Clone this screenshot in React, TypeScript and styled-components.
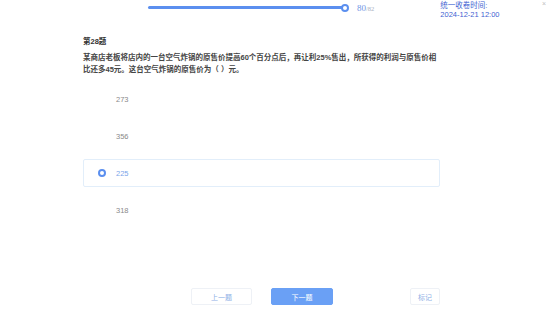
import * as React from 'react'
import styled, { createGlobalStyle } from 'styled-components'

const GlobalStyle = createGlobalStyle`
    html, body {
        margin: 0;
        padding: 0;
        background: #ffffff;
    }
    body {
        font-family: "Liberation Sans", "Noto Sans CJK SC", sans-serif;
    }
`

const Page = styled.div`
    width: 554px;
    height: 324px;
    display: flex;
    flex-direction: column;
    overflow: hidden;
    position: relative;
`

const Header = styled.div`
    display: flex;
    align-items: flex-start;
    height: 28px;
`

const Progress = styled.div`
    display: flex;
    align-items: center;
    margin-left: 148px;
    margin-top: 3px;
    height: 9px;
`

const Track = styled.div`
    position: relative;
    width: 198px;
    height: 3px;
    border-radius: 2px;
    background: #5b8fef;
`

const Knob = styled.div`
    position: absolute;
    right: -3px;
    top: -2.5px;
    width: 4px;
    height: 4px;
    border-radius: 50%;
    border: 2px solid #5b8fef;
    background: #fff;
`

const Count = styled.div`
    margin-left: 11px;
    font-family: "Liberation Serif", serif;
    font-size: 9px;
    color: #6f95e6;
    span {
        color: #a9b1bf;
        font-size: 6.5px;
    }
`

const Deadline = styled.div`
    margin-left: 66px;
    margin-top: 1px;
    font-size: 7.5px;
    line-height: 9px;
    color: #3f5fd2;
`

const Close = styled.div`
    margin-left: auto;
    margin-right: 8px;
    font-size: 7px;
    line-height: 7px;
    color: #c0c0c0;
`

const Body = styled.div`
    padding-left: 83px;
    width: 357px;
    flex: 1;
    display: flex;
    flex-direction: column;
`

const Title = styled.div`
    font-size: 7.5px;
    font-weight: bold;
    color: #333;
    line-height: 10px;
    margin-top: 9px;
`

const Question = styled.div`
    margin-top: 5px;
    font-size: 7.5px;
    font-weight: bold;
    color: #444;
    line-height: 12px;
    width: 356px;
`

const Options = styled.div`
    margin-top: 9px;
    display: flex;
    flex-direction: column;
    gap: 9px;
`

const Option = styled.div<{ $selected?: boolean }>`
    height: 28px;
    box-sizing: border-box;
    display: flex;
    align-items: center;
    padding-left: 14px;
    border: 1px solid ${p => (p.$selected ? '#e2eefa' : 'transparent')};
    border-radius: 2px;
    font-size: 7.5px;
    color: ${p => (p.$selected ? '#7aa5ea' : '#8a8a8a')};
`

const Radio = styled.span<{ $checked?: boolean }>`
    width: 4px;
    height: 4px;
    border-radius: 50%;
    border: 2.5px solid ${p => (p.$checked ? '#5b8fef' : 'transparent')};
    margin-right: 10px;
`

const Footer = styled.div`
    display: flex;
    align-items: center;
    height: 17px;
    margin: auto 0 19px 191px;
`

const Button = styled.button<{ $primary?: boolean; $w: number }>`
    width: ${p => p.$w}px;
    height: 17px;
    box-sizing: border-box;
    padding: 0;
    border-radius: 2px;
    border: 1px solid ${p => (p.$primary ? '#6aa0f5' : '#eef1f6')};
    background: ${p => (p.$primary ? '#6aa0f5' : '#fff')};
    color: ${p => (p.$primary ? '#fff' : '#8fb0e6')};
    font-family: "Liberation Sans", "Noto Sans CJK SC", sans-serif;
    font-size: 7px;
`

const Spacer = styled.div<{ $w: number }>`
    width: ${p => p.$w}px;
`

const options = [
    { label: '273' },
    { label: '356' },
    { label: '225', selected: true },
    { label: '318' },
]

const App = () => {
    return (
        <Page>
            <GlobalStyle />
            <Header>
                <Progress>
                    <Track>
                        <Knob />
                    </Track>
                    <Count>80<span>/82</span></Count>
                </Progress>
                <Deadline>
                    统一收卷时间:
                    <br />
                    2024-12-21 12:00
                </Deadline>
                <Close>×</Close>
            </Header>
            <Body>
                <Title>第28题</Title>
                <Question>
                    某商店老板将店内的一台空气炸锅的原售价提高60个百分点后，再让利25%售出，所获得的利润与原售价相比还多45元。这台空气炸锅的原售价为（ ）元。
                </Question>
                <Options>
                    {options.map(o => (
                        <Option key={o.label} $selected={o.selected}>
                            <Radio $checked={o.selected} />
                            {o.label}
                        </Option>
                    ))}
                </Options>
            </Body>
            <Footer>
                <Button $w={61}>上一题</Button>
                <Spacer $w={19} />
                <Button $w={62} $primary>下一题</Button>
                <Spacer $w={77} />
                <Button $w={30}>标记</Button>
            </Footer>
        </Page>
    )
}

export default App
